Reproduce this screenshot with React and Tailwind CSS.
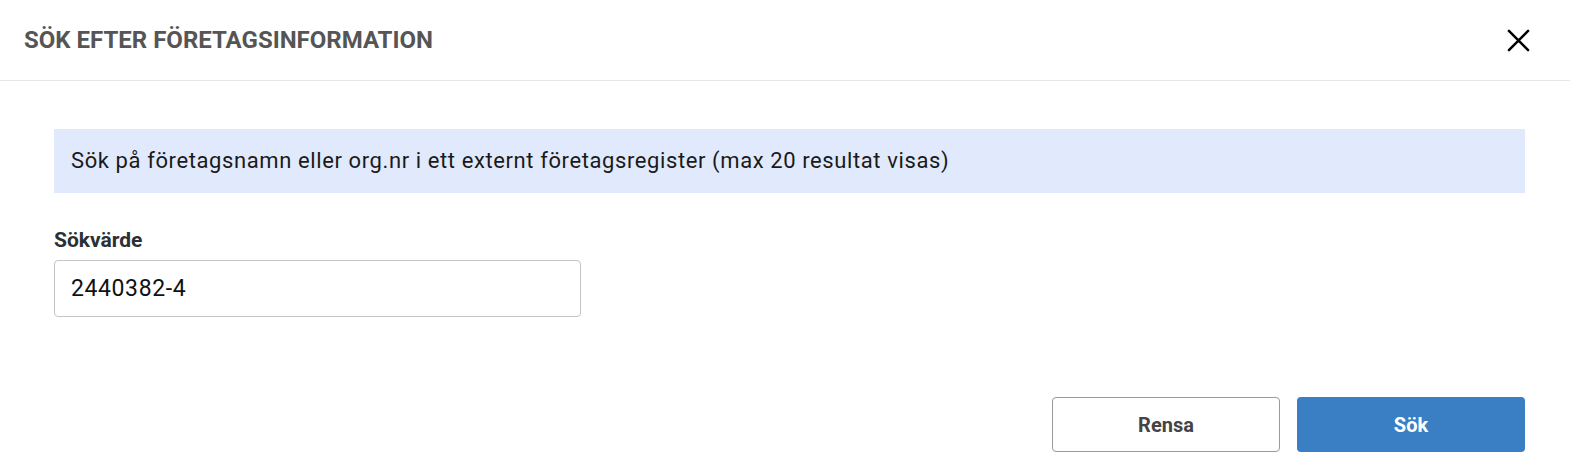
import React, { useState } from 'react'

export default function App() {
  const [value, setValue] = useState('2440382-4')

  return (
    <div className="w-[1570px] h-[472px] bg-white font-['Roboto',sans-serif]">
      {/* Header */}
      <div className="h-[81px] flex items-center justify-between pl-6 pr-[40px] border-b border-[#e6e6e6]">
        <h2 className="text-[24px] font-bold text-[#555555] leading-none">SÖK EFTER FÖRETAGSINFORMATION</h2>
        <button type="button" className="w-[24px] h-[24px] flex items-center justify-center">
          <svg width="23" height="23" viewBox="0 0 24 24" fill="none" stroke="#000" strokeWidth="2.6" strokeLinecap="round">
            <path d="M2 2L22 22M22 2L2 22" />
          </svg>
        </button>
      </div>

      {/* Body */}
      <div className="pl-[54px] pr-[45px] pt-12">
        <div className="h-[64px] bg-[#e1eafc] flex items-center px-[17px]">
          <p className="text-[22px] text-[#1a1a1a] tracking-[0.6px] leading-none">
            Sök på företagsnamn eller org.nr i ett externt företagsregister (max 20 resultat visas)
          </p>
        </div>

        <label className="block mt-[35px] text-[21px] font-bold text-[#2a3036] leading-[24px]">Sökvärde</label>
        <input
          type="text"
          value={value}
          onChange={(e) => setValue(e.target.value)}
          className="block mt-[8px] w-[527px] h-[57px] px-4 border border-[#c4c4c4] rounded-[4px] text-[23px] text-[#111] tracking-[0.6px] focus:outline-none"
        />

        <div className="flex justify-end gap-[17px] mt-[80px]">
          <button type="button" className="w-[228px] h-[55px] border border-[#9a9a9a] rounded-[4px] bg-white text-[20px] font-bold text-[#444]">
            Rensa
          </button>
          <button type="button" className="w-[228px] h-[55px] rounded-[4px] bg-[#3a7fc4] text-[20px] font-bold text-white">
            Sök
          </button>
        </div>
      </div>
    </div>
  )
}
